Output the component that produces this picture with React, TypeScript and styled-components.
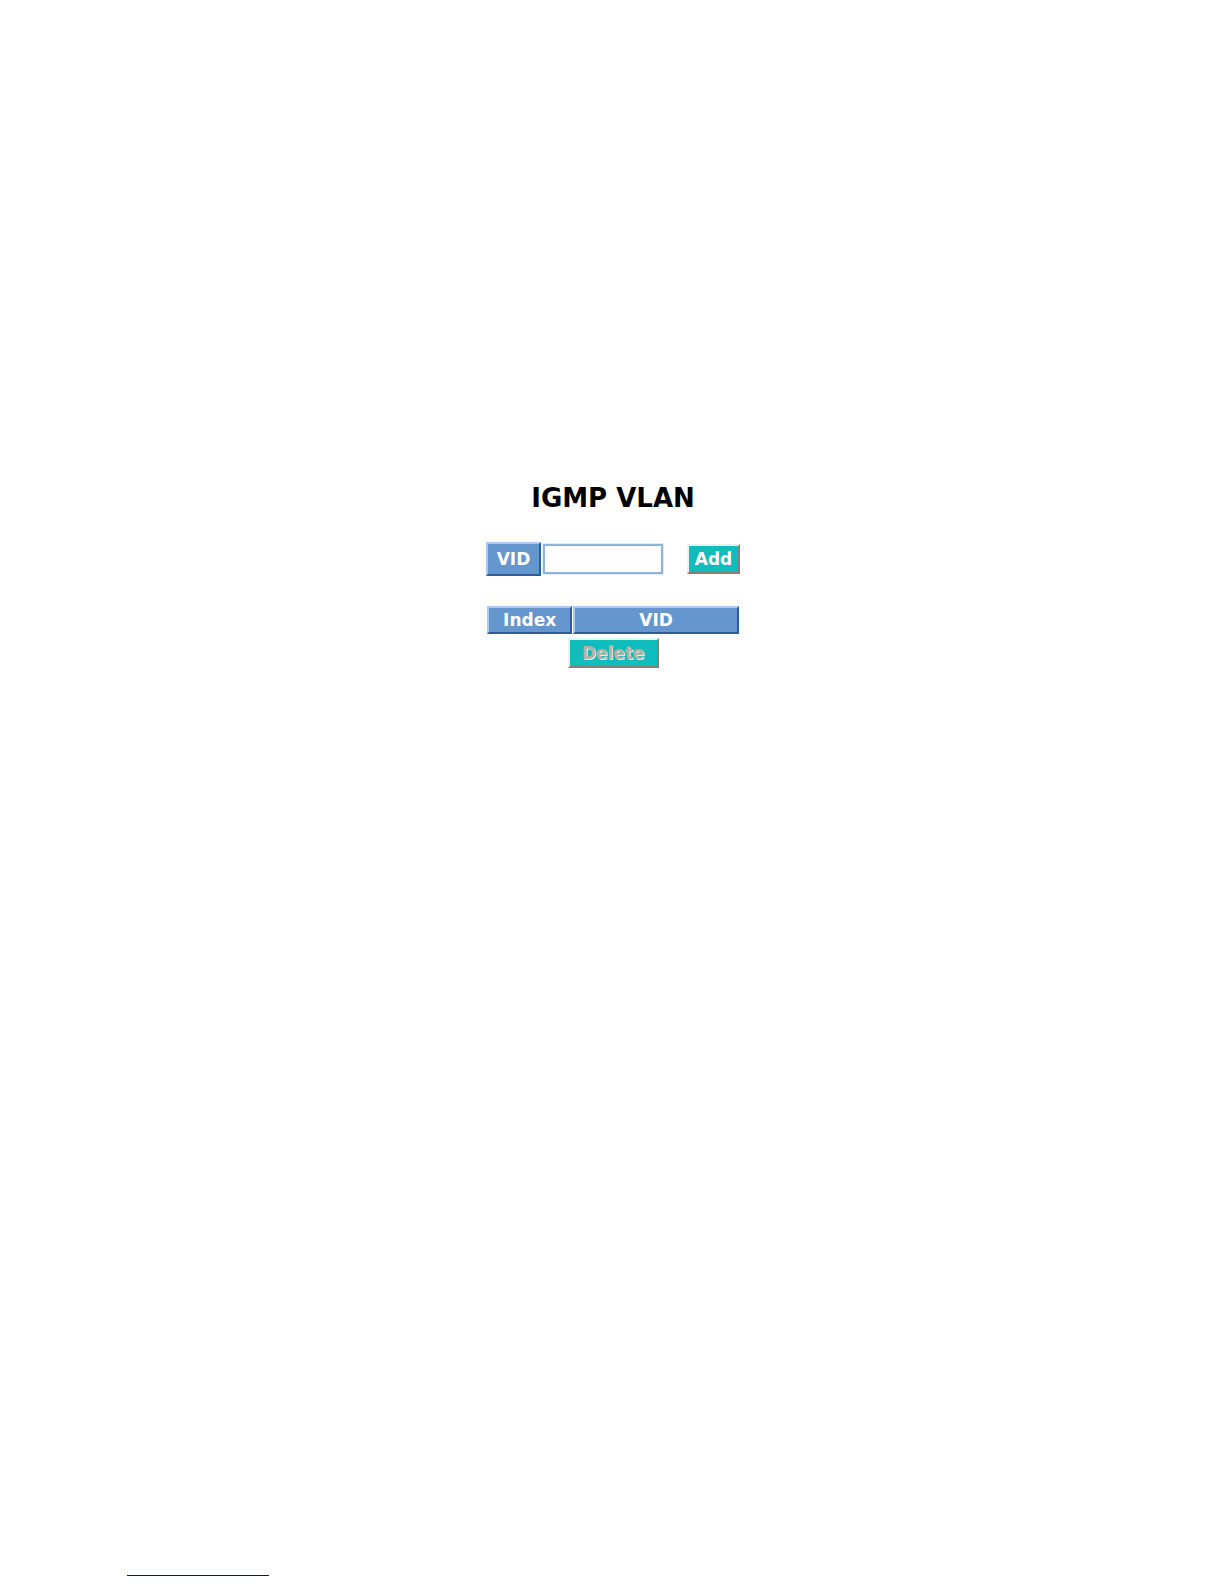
import React, { useState } from "react";
import styled, { createGlobalStyle } from "styled-components";

const GlobalStyle = createGlobalStyle`
  *, *::before, *::after { box-sizing: border-box; }
  body {
    margin: 0;
    background: #ffffff;
    font-family: Verdana, "DejaVu Sans", sans-serif;
    font-size: 17px;
    line-height: 20px;
  }
`;

const Page = styled.div`
  display: flex;
  flex-direction: column;
  min-height: 100vh;
`;

const Main = styled.main`
  flex: 1;
  display: flex;
  flex-direction: column;
  align-items: center;
  padding: 482px 16px 32px 18px;
`;

const Title = styled.h1`
  margin: 0 0 28px;
  font-size: 26px;
  line-height: 32px;
  font-weight: bold;
  color: #000000;
`;

const Panel = styled.div`
  display: flex;
  flex-direction: column;
  align-items: center;
  gap: 29px;
  width: 254px;
`;

const EntryForm = styled.form`
  display: flex;
  align-items: center;
  justify-content: space-between;
  width: 100%;
`;

const Field = styled.div`
  display: flex;
  align-items: center;
  gap: 2px;
`;

const FieldLabel = styled.label`
  display: flex;
  align-items: center;
  justify-content: center;
  width: 55px;
  height: 34px;
  border: 2px solid;
  border-color: #a9c9ee #2f5b9b #2f5b9b #a9c9ee;
  background: #6596cd;
  color: #ffffff;
  font-weight: bold;
`;

const TextBox = styled.input`
  width: 120px;
  height: 30px;
  padding: 2px 6px;
  border: 2px solid #8fb2d8;
  outline: 1px solid #dfedfb;
  border-radius: 0;
  background: #ffffff;
  font: inherit;
`;

const Button = styled.button<{ $wide?: boolean }>`
  width: ${(p) => (p.$wide ? "91px" : "53px")};
  height: 30px;
  padding: 0;
  border: 2px solid;
  border-color: #e6f3f0 #857f78 #857f78 #e6f3f0;
  border-radius: 0;
  background: #10bdbd;
  color: #ffffff;
  font: inherit;
  font-weight: bold;

  &:disabled {
    color: #b5afa6;
    text-shadow: 1px 1px 0 #ece8e0;
  }
`;

const ListForm = styled.form`
  display: flex;
  flex-direction: column;
  align-items: center;
  gap: 3px;
  width: 100%;
`;

const Table = styled.table`
  width: 100%;
  border-collapse: separate;
  border-spacing: 1px;
  table-layout: fixed;
`;

const HeadCell = styled.th<{ $narrow?: boolean }>`
  width: ${(p) => (p.$narrow ? "34%" : "auto")};
  height: 28px;
  padding: 0;
  border: 2px solid;
  border-color: #a9c9ee #2f5b9b #2f5b9b #a9c9ee;
  background: #6596cd;
  color: #ffffff;
`;

const Footer = styled.footer`
  padding: 0 127px 8px;
`;

const FooterRule = styled.hr`
  width: 142px;
  margin: 0;
  border: 0;
  border-top: 1px solid #0e0e8c;
`;

export default function App() {
  const [vid, setVid] = useState("");

  return (
    <Page>
      <GlobalStyle />
      <Main>
        <Title>IGMP VLAN</Title>
        <Panel>
          <EntryForm onSubmit={(e) => e.preventDefault()}>
            <Field>
              <FieldLabel htmlFor="vid">VID</FieldLabel>
              <TextBox
                id="vid"
                type="text"
                value={vid}
                onChange={(e) => setVid(e.target.value)}
              />
            </Field>
            <Button type="submit">Add</Button>
          </EntryForm>
          <ListForm onSubmit={(e) => e.preventDefault()}>
            <Table>
              <thead>
                <tr>
                  <HeadCell scope="col" $narrow>Index</HeadCell>
                  <HeadCell scope="col">VID</HeadCell>
                </tr>
              </thead>
            </Table>
            <Button type="submit" $wide disabled>Delete</Button>
          </ListForm>
        </Panel>
      </Main>
      <Footer>
        <FooterRule />
      </Footer>
    </Page>
  );
}
